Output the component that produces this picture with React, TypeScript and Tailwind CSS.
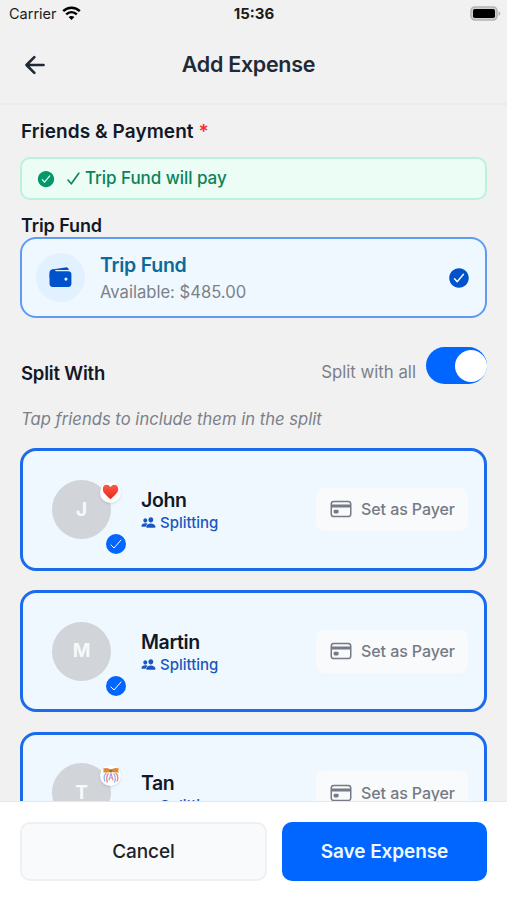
import { useState } from "react";
import {
  IoArrowBack,
  IoCardOutline,
  IoCheckmark,
  IoCheckmarkCircle,
  IoPeople,
  IoWallet,
} from "react-icons/io5";

type Friend = {
  name: string;
  badge?: "heart" | "ribbon";
};

const friends: Friend[] = [
  { name: "John", badge: "heart" },
  { name: "Martin" },
  { name: "Tan", badge: "ribbon" },
];

function WifiIcon() {
  return (
    <svg width="19" height="15" viewBox="0 0 19 15" fill="none" stroke="#000">
      <path d="M1.2 5.2C5.8 .6 13.2 .6 17.8 5.2" strokeWidth="2.5" />
      <path d="M4.2 8.3C7.2 5.4 11.8 5.4 14.8 8.3" strokeWidth="2.4" />
      <path d="M9.5 14L6.6 11.1C8.2 9.5 10.8 9.5 12.4 11.1Z" fill="#000" stroke="none" />
    </svg>
  );
}

function BatteryIcon() {
  return (
    <svg width="31" height="15" viewBox="0 0 31 15">
      <rect x="1" y="1" width="26" height="13" rx="4" fill="#d0d0d0" stroke="#b4b4b4" strokeWidth="1.6" />
      <rect x="3" y="3" width="22" height="9" rx="1.8" fill="#000" />
      <path d="M28.6 5.2C30.8 6 30.8 9 28.6 9.8Z" fill="#b0b0b0" />
    </svg>
  );
}

function HeartIcon() {
  return (
    <svg width="17" height="16" viewBox="0 0 18 17">
      <defs>
        <linearGradient id="heart" x1="0" y1="0" x2="0" y2="1">
          <stop offset="0" stopColor="#ff5a4a" />
          <stop offset="1" stopColor="#e5281c" />
        </linearGradient>
      </defs>
      <path
        d="M9 16.2C6.5 13.2 .8 10 .8 5.2C.8 2.5 2.6 .8 4.9 .8C6.8 .8 8.2 1.8 9 3.5C9.8 1.8 11.2 .8 13.1 .8C15.4 .8 17.2 2.5 17.2 5.2C17.2 10 11.5 13.2 9 16.2Z"
        fill="url(#heart)"
      />
    </svg>
  );
}

function RibbonIcon() {
  return (
    <svg width="18" height="18" viewBox="0 0 18 18" fill="none">
      <path d="M4.5 6C1.8 8 1.6 11 3 14.5" stroke="#8fb4f2" strokeWidth="1.3" />
      <path d="M6.5 6.5C4 9 4.4 12 5.4 15.5" stroke="#f0808c" strokeWidth="1.3" />
      <path d="M9 6.5L6.8 13.5" stroke="#8fb4f2" strokeWidth="1.2" />
      <path d="M9 6.5L11.2 13.5M7.6 11H10.4" stroke="#f0808c" strokeWidth="1.1" />
      <path d="M11.5 6.5C14 9 13.6 12 12.6 15.5" stroke="#8fb4f2" strokeWidth="1.3" />
      <path d="M13.5 6C16.2 8 16.4 11 15 14.5" stroke="#f0808c" strokeWidth="1.3" />
      <path
        d="M9 3C7 .8 3.2 .4 .9 1.8C2 2.8 1.6 4.2 1.2 5.4C4.2 5.9 7 5.4 9 4.6C11 5.4 13.8 5.9 16.8 5.4C16.4 4.2 16 2.8 17.1 1.8C14.8 .4 11 .8 9 3Z"
        fill="#dc8c36"
      />
      <circle cx="9" cy="3.9" r="1.6" fill="#b0651a" />
    </svg>
  );
}

function FriendCard({ friend }: { friend: Friend }) {
  return (
    <div className="flex h-[122.4px] shrink-0 items-center rounded-[16px] border-3 border-[#1c6bec] bg-[#f0f8ff] pr-[16px] pl-[29px]">
      {/* Avatar */}
      <div className="relative flex size-[59px] shrink-0 items-center justify-center rounded-full bg-[#d1d4d9] pt-px text-[19px] font-bold text-[#f8f9fa]">
        {friend.name[0]}
        {friend.badge && (
          <span className="absolute top-[2px] -right-[10px] flex size-[21px] items-center justify-center rounded-full bg-white shadow-sm">
            {friend.badge === "heart" ? <HeartIcon /> : <RibbonIcon />}
          </span>
        )}
        <span className="absolute -right-[15px] -bottom-[15px] flex size-5 items-center justify-center rounded-full bg-[#0066ff] text-white">
          <IoCheckmark className="size-4" />
        </span>
      </div>

      <div className="ml-[30px] flex-1 pt-[3px]">
        <p className="text-[19.5px] leading-6 font-semibold tracking-[-0.4px] text-[#111827]">
          {friend.name}
        </p>
        <p className="flex items-center gap-[4px] text-[15px] leading-[22px] font-medium text-[#1857c0]">
          <IoPeople className="size-[15px]" />
          Splitting
        </p>
      </div>

      <button className="flex h-[43px] w-[152px] items-center justify-center gap-[8px] rounded-[8px] bg-[#f9fafb] text-[16px] font-medium tracking-[-0.08px] whitespace-nowrap text-[#757a84]">
        <IoCardOutline className="size-6" />
        Set as Payer
      </button>
    </div>
  );
}

export default function App() {
  const [splitAll, setSplitAll] = useState(true);

  return (
    <div className="flex h-[900px] w-[507px] flex-col overflow-hidden bg-[#f1f1f1] font-['Inter',sans-serif]">
      {/* Status bar */}
      <div className="grid h-[27px] shrink-0 grid-cols-3 items-center pr-[6px] pl-[9px] text-[14.5px] text-[#1c1c1e]">
        <div className="flex items-center gap-[5px]">
          <span>Carrier</span>
          <WifiIcon />
        </div>
        <span className="pt-px pr-[2px] text-center text-[15px] font-bold">15:36</span>
        <div className="flex justify-end">
          <BatteryIcon />
        </div>
      </div>

      {/* Header */}
      <header className="grid h-[78px] shrink-0 grid-cols-[1fr_auto_1fr] items-center border-b-2 border-[#ebebec] pr-[31px] pb-px pl-[21px]">
        <button aria-label="Back">
          <IoArrowBack className="size-7 text-[#1f2937]" />
        </button>
        <h1 className="text-[21.5px] font-semibold tracking-[-0.3px] text-[#1f2937]">
          Add Expense
        </h1>
      </header>

      {/* Form */}
      <main className="flex min-h-0 flex-1 flex-col overflow-hidden px-[20px] pt-[15px]">
        <h2 className="pl-px text-[19px] leading-6 font-semibold tracking-[0.08px] text-[#111827]">
          Friends &amp; Payment <span className="text-[#ef3030]">*</span>
        </h2>

        <div className="mt-[13px] flex h-[43px] shrink-0 items-center rounded-[10px] border-2 border-[#b8f3da] bg-[#ecfdf5] px-[14px] text-[17px] font-medium tracking-[-0.05px] text-[#0b8259]">
          <IoCheckmarkCircle className="size-5 text-[#059669]" />
          <svg
            className="mr-[5px] ml-[11px] shrink-0"
            width="13"
            height="13"
            viewBox="0 0 13 13"
            fill="none"
            stroke="currentColor"
            strokeWidth="1.6"
            strokeLinecap="round"
            strokeLinejoin="round"
          >
            <path d="M1 8L4.3 11.8L11.8 1.2" />
          </svg>
          <span className="pt-px">Trip Fund will pay</span>
        </div>

        <h3 className="mt-[14px] pl-px text-[18px] leading-6 font-semibold tracking-[-0.1px] text-[#111827]">
          Trip Fund
        </h3>
        <div className="-mt-[1px] flex h-[81px] shrink-0 items-center rounded-[16px] border-2 border-[#5f9af3] bg-[#f0f8ff] pr-[14px] pl-[14px]">
          <div className="flex size-[49px] items-center justify-center rounded-full bg-[#e2f1ff]">
            <IoWallet className="size-[25px] text-[#0052cc]" />
          </div>
          <div className="ml-[15px] flex-1">
            <p className="text-[19.5px] leading-7 font-semibold tracking-[-0.25px] text-[#0b6a9b]">
              Trip Fund
            </p>
            <p className="text-[16.6px] leading-[26px] text-[#7b808a]">Available: $485.00</p>
          </div>
          <IoCheckmarkCircle className="size-6 text-[#0052cc]" />
        </div>

        <div className="mt-[29px] flex items-start justify-between">
          <h3 className="pt-[14px] pl-px text-[18.5px] leading-6 font-semibold tracking-[-0.2px] text-[#111827]">
            Split With
          </h3>
          <div className="flex items-start gap-[10px]">
            <span className="pt-[13px] text-[16.8px] leading-6 text-[#7b808a]">
              Split with all
            </span>
            <button
              role="switch"
              aria-checked={splitAll}
              aria-label="Split with all"
              onClick={() => setSplitAll(!splitAll)}
              className={`flex h-[37px] w-[61px] items-center rounded-full ${
                splitAll ? "justify-end bg-[#0066ff]" : "justify-start bg-[#d1d5db]"
              }`}
            >
              <span className="size-8 rounded-full bg-white" />
            </button>
          </div>
        </div>

        <p className="mt-[22px] pl-px text-[16.6px] leading-6 tracking-[0.02px] text-[#7b808a] italic">
          Tap friends to include them in the split
        </p>

        <div className="mt-[17.3px] flex flex-col gap-[19.3px]">
          {friends.map((friend) => (
            <FriendCard key={friend.name} friend={friend} />
          ))}
        </div>
      </main>

      {/* Actions */}
      <footer className="flex h-[99px] shrink-0 gap-[15px] border-t border-[#e5e7eb] bg-white px-[20px] pt-[20px]">
        <button className="h-[59px] w-[247px] rounded-[10px] border-2 border-[#eff0f1] bg-[#f9fafc] pt-px text-[19px] font-medium tracking-[-0.1px] text-[#1f2329]">
          Cancel
        </button>
        <button className="h-[59px] flex-1 rounded-[10px] bg-[#0066ff] pt-px text-[19px] font-semibold tracking-[-0.1px] text-[#f0f8ff]">
          Save Expense
        </button>
      </footer>
    </div>
  );
}
